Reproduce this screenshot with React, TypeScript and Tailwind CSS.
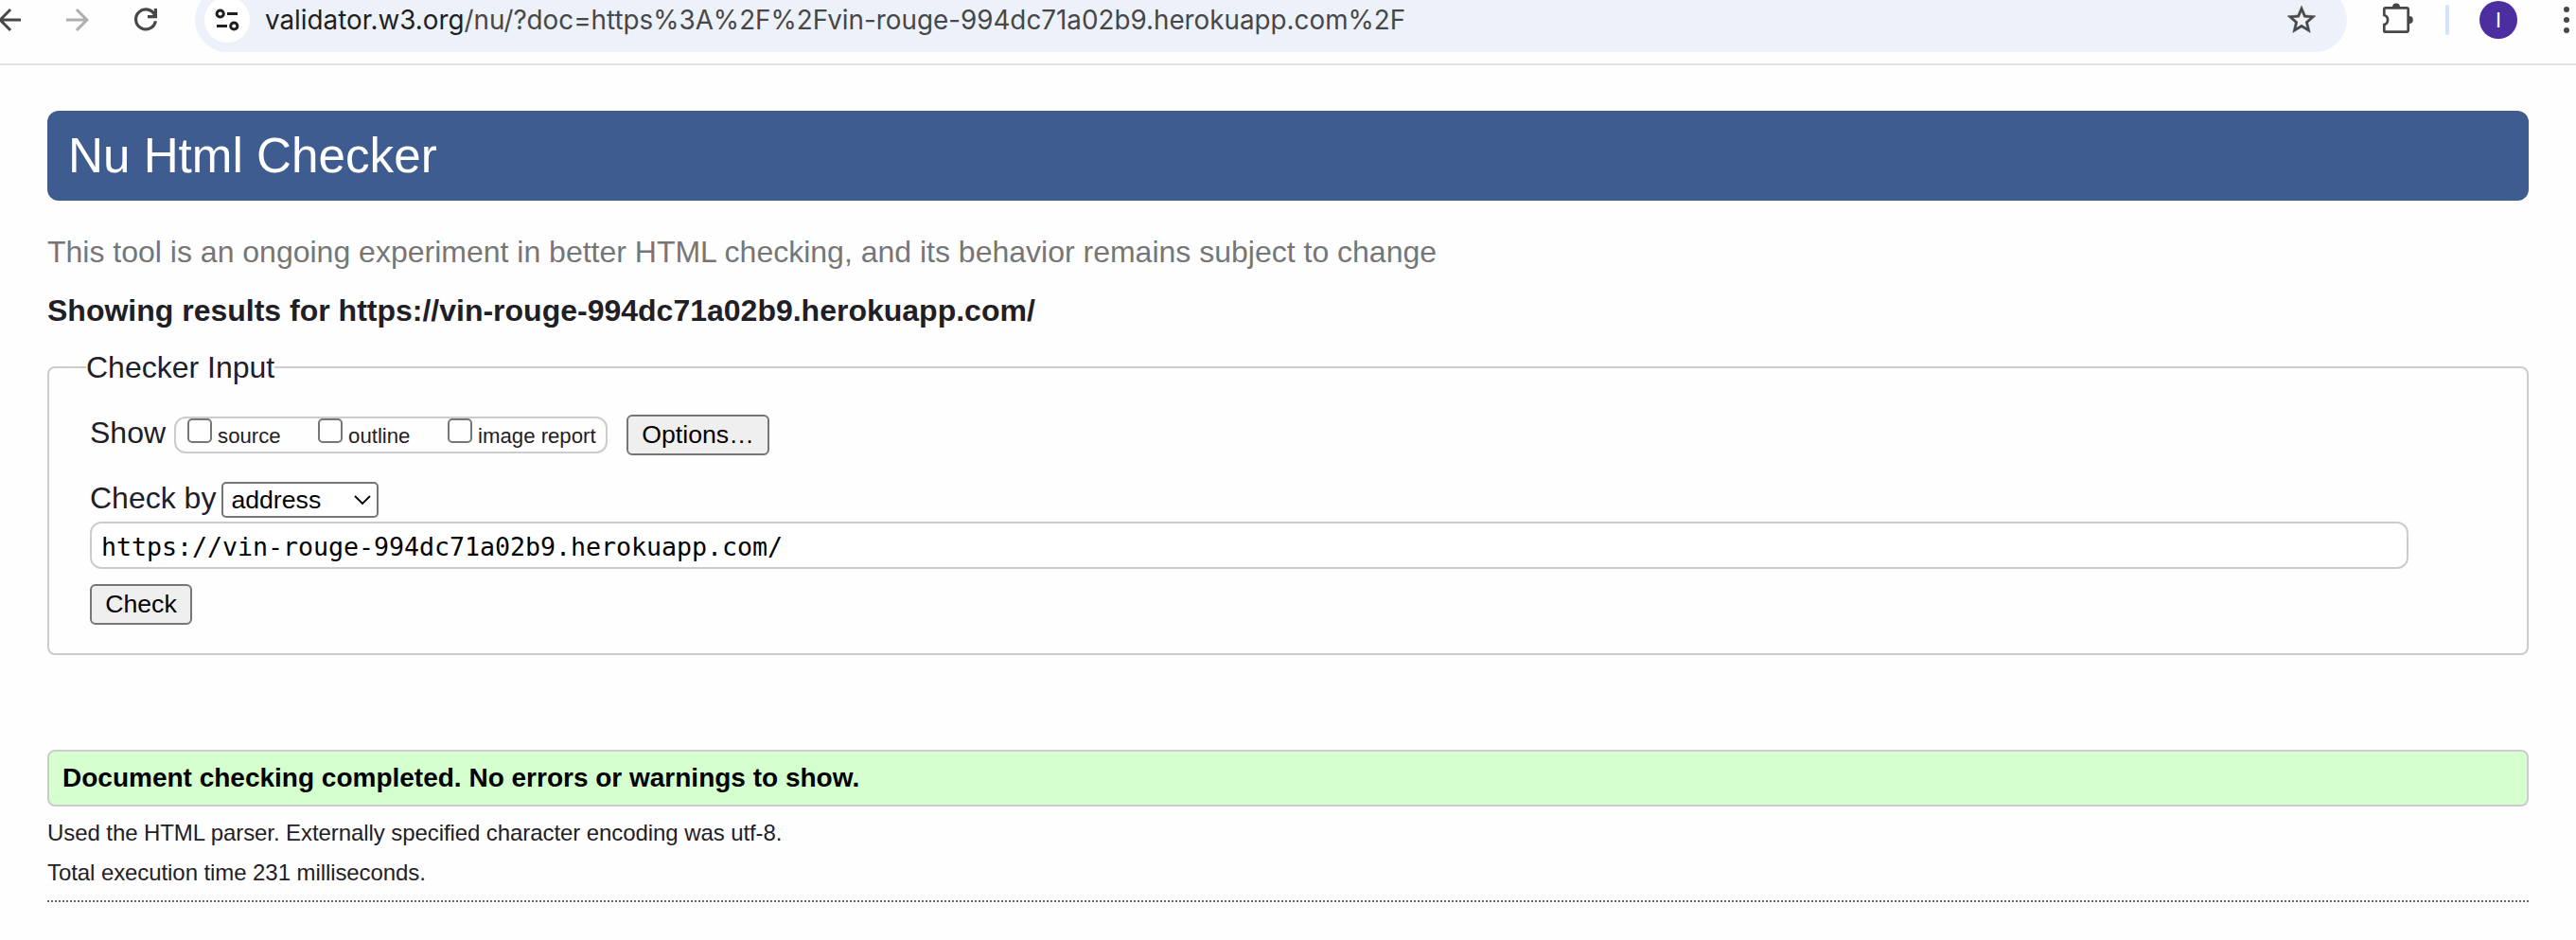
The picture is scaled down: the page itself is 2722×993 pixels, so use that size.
const SITE = "https://vin-rouge-994dc71a02b9.herokuapp.com/";

function Toolbar() {
  return (
    <header className="h-[69px] overflow-hidden border-b-2 border-[#e1e1e1]">
      <div className="-mt-[13px] flex h-[68px] items-center text-[#474747]">
        <svg className="-ml-2 size-9 shrink-0" viewBox="0 0 24 24" fill="currentColor">
          <path d="M20 11H7.83l5.59-5.59L12 4l-8 8 8 8 1.41-1.41L7.83 13H20v-2z" />
        </svg>
        <svg className="ml-9 size-9 shrink-0 text-[#aeaeae]" viewBox="0 0 24 24" fill="currentColor">
          <path d="M12 4l-1.41 1.41L16.17 11H4v2h12.17l-5.58 5.59L12 20l8-8z" />
        </svg>
        <svg className="ml-9 size-9 shrink-0" viewBox="0 0 36 36" fill="none" stroke="currentColor" strokeWidth="3.2">
          <path d="M27.7 13.2A10.5 10.5 0 1 0 28.4 19.2" />
          <path d="M28.4 6v8.700H20" />
        </svg>
        <div className="ml-[34px] flex h-[68px] w-[2274px] shrink-0 items-center rounded-full bg-[#edf2fa] pr-[30px] pl-[10px]">
          <div className="flex size-12 items-center justify-center rounded-full bg-white text-[#1f1f1f]">
            <svg className="size-9" viewBox="0 0 36 36" fill="none" stroke="currentColor" strokeWidth="3">
              <circle cx="10.7" cy="11.5" r="3.6" />
              <path d="M18 11.5h11M7 24.5h11" />
              <circle cx="25.3" cy="24.5" r="3.6" />
            </svg>
          </div>
          <div className="ml-4 grow whitespace-nowrap font-[Inter,sans-serif] text-[27.800px] leading-[36px] text-[#474747]">
            <span className="text-[#1f1f1f]">validator.w3.org</span>/nu/?doc=https%3A%2F%2Fvin-rouge-994dc71a02b9.herokuapp.com%2F
          </div>
          <svg className="size-9" viewBox="0 0 24 24" fill="currentColor" stroke="currentColor" strokeWidth="0.3">
            <path d="M22 9.24l-7.19-.62L12 2 9.19 8.63 2 9.24l5.46 4.73L5.82 21 12 17.27 18.18 21l-1.63-7.03L22 9.24zM12 15.4l-3.76 2.27 1-4.28-3.32-2.88 4.38-.38L12 6.1l1.71 4.04 4.38.38-3.32 2.88 1 4.28L12 15.4z" />
          </svg>
        </div>
        <svg className="ml-[36px] size-9 shrink-0" viewBox="0 0 36 36">
          <path d="M4.800 5.300h22.400a1.500 1.500 0 0 1 1.500 1.500v22.400a1.500 1.500 0 0 1-1.500 1.500H4.800a1.500 1.500 0 0 1-1.500-1.500v-6.200a5.200 5.200 0 0 0 0-10V6.800a1.500 1.500 0 0 1 1.500-1.500z" fill="none" stroke="currentColor" strokeWidth="2.7" />
          <path d="M12 4.500a4 4 0 0 1 8 0zM29.800 14a4 4 0 0 1 0 8z" fill="currentColor" />
        </svg>
        <div className="ml-8 h-8 w-1 shrink-0 rounded-full bg-[#d5e2fb]" />
        <div className="ml-8 flex size-10 shrink-0 items-center justify-center rounded-full bg-[#4c2ea1] font-[Roboto,sans-serif] text-[22px] text-white">I</div>
        <svg className="ml-[34px] size-9 shrink-0" viewBox="0 0 36 36" fill="currentColor">
          <circle cx="18" cy="7" r="3" />
          <circle cx="18" cy="18" r="3" />
          <circle cx="18" cy="29" r="3" />
        </svg>
      </div>
    </header>
  );
}

function ShowOption({ label, className }: { label: string; className: string }) {
  return (
    <label className={"flex items-start " + className}>
      <span className="size-[26px] shrink-0 rounded-[5px] border-2 border-[#767676] bg-white" />
      <span className="ml-[6px] pt-[6px] text-[22.200px] leading-[26px]">{label}</span>
    </label>
  );
}

export default function App() {
  return (
    <div className="h-[993px] w-[2722px] overflow-hidden bg-[#fefefe] font-['Liberation_Sans',Arial,sans-serif] text-[32px] text-[#1f2026]">
      <Toolbar />
      <main className="px-[50px] pt-12">
        <h1 className="h-[95px] rounded-xl bg-[#3f5c91] pl-[22px] text-[51.200px] leading-[95px] text-white">Nu Html Checker</h1>
        <p className="mt-[34px] h-10 whitespace-nowrap leading-[40px] text-[#767676]">This tool is an ongoing experiment in better HTML checking, and its behavior remains subject to change</p>
        <h2 className="mt-[22px] h-10 whitespace-nowrap font-bold leading-[40px]">Showing results for {SITE}</h2>
        <fieldset className="mt-[21px] h-[323px] rounded-lg border-2 border-[#ccc] pl-[43px]">
          <legend className="-ml-[4px] h-[38px] leading-[38px]">Checker Input</legend>
          <div className="mt-[31px] flex h-[43px]">
            <span className="leading-[39px]">Show</span>
            <div className="mt-[2px] ml-[9px] flex h-[39px] w-[458px] rounded-xl border-2 border-[#ccc] pl-[12px]">
              <ShowOption label="source" className="w-[138px]" />
              <ShowOption label="outline" className="w-[137px]" />
              <ShowOption label="image report" className="whitespace-nowrap" />
            </div>
            <button className="ml-5 h-[43px] w-[151px] rounded-md border-2 border-[#767676] bg-[#efefef] text-[26.670px] leading-[39px] text-black">Options…</button>
          </div>
          <div className="mt-7 flex h-[38px] items-start">
            <span className="leading-[34px]">Check by</span>
            <div className="ml-[6px] flex h-[38px] w-[166px] items-center justify-between rounded-[5px] border-2 border-[#767676] bg-white pr-[6px] pl-2 text-[26.670px] text-black">
              <span>address</span>
              <svg className="h-[12px] w-[18px]" viewBox="0 0 18 12" fill="none" stroke="currentColor" strokeWidth="1.8">
                <path d="M1 2l8 8 8-8" />
              </svg>
            </div>
          </div>
          <div className="mt-1 h-[50px] w-[2450px] rounded-xl border-2 border-[#ccc] bg-white pl-[10px] font-['DejaVu_Sans_Mono',monospace] text-[26.670px] leading-[49px] tracking-[-0.050px] text-black">{SITE}</div>
          <button className="mt-4 block h-[43px] w-[108px] rounded-md border-2 border-[#767676] bg-[#efefef] text-[26.670px] leading-[39px] text-black">Check</button>
        </fieldset>
        <p className="mt-[100px] h-[60px] rounded-lg border-2 border-[#ccc] bg-[#d6ffcf] pl-[14px] text-[28px] font-bold leading-[56px] text-black">Document checking completed. No errors or warnings to show.</p>
        <p className="mt-[8px] h-[42px] text-[24px] leading-[40px] tracking-[-0.080px]">Used the HTML parser. Externally specified character encoding was utf-8.</p>
        <p className="h-[42px] text-[24px] leading-[40px] tracking-[-0.080px]">Total execution time 231 milliseconds.</p>
        <div className="mt-[7px] h-[2px] bg-[repeating-linear-gradient(90deg,#666_0_2px,transparent_2px_4px)]" />
      </main>
    </div>
  );
}
